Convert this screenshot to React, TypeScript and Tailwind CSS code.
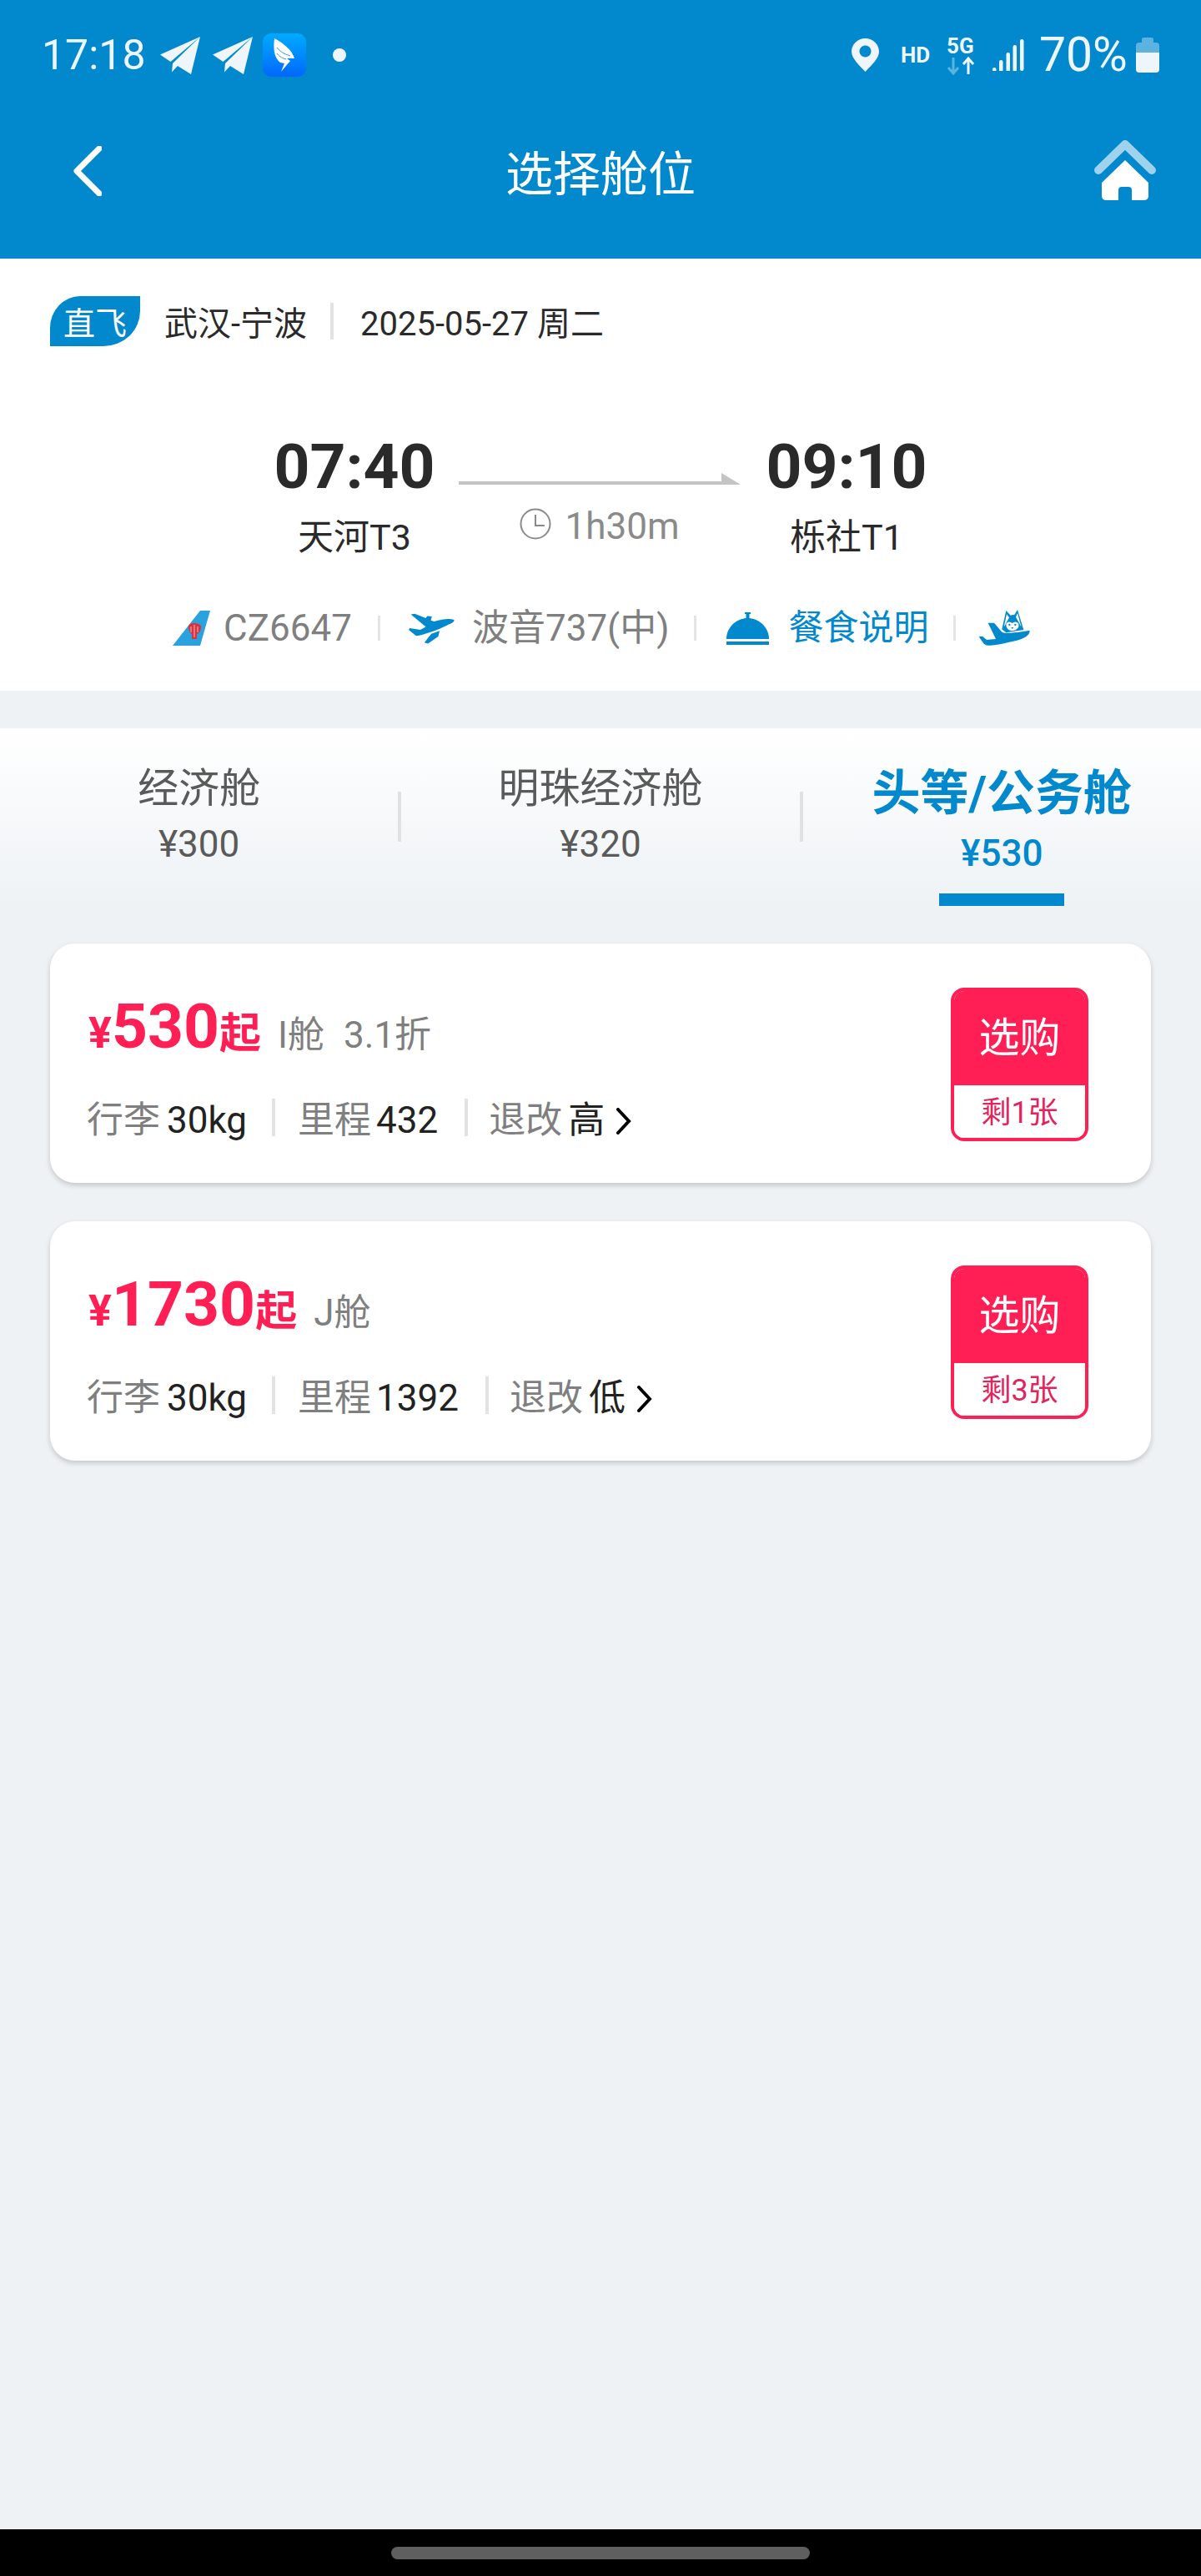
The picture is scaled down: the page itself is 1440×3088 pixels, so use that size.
import React from "react";

const BLUE = "#0288cc";

function Plane() {
  return (
    <svg width="48" height="45" viewBox="0 0 48 45" className="shrink-0">
      <path d="M48 0 L0 21.5 L12.5 30 Z" fill="#eef6fb" />
      <path d="M48 0 L37 45 L21 35 L14 42.5 L15 32 Z" fill="#eef6fb" />
    </svg>
  );
}

function AppIcon() {
  return (
    <div className="w-[52px] h-[52px] rounded-[10px] bg-gradient-to-b from-[#00aaff] to-[#0066ff] shrink-0 flex items-center justify-center">
      <svg width="52" height="52" viewBox="0 0 52 52">
        <path d="M14 6 C22 10 36 20 38 30 L29 30 L33 33 L22 46 L26 36 L21 35 C15 30 12 22 14 6 Z" fill="#ffffff" />
        <path d="M17 17 C21 22 26 25 33 27 M17 24 C20 28 24 30 28 31" stroke="#3a9bff" strokeWidth="1" fill="none" />
      </svg>
    </div>
  );
}

function Signal() {
  const bars = [
    [0, 34, 5],
    [8, 25, 14],
    [16.5, 16, 23],
    [24.5, 7, 32],
    [33, 0, 38],
  ];
  return (
    <svg width="38" height="38" viewBox="0 0 38 38" className="shrink-0">
      {bars.map(([x, y, h]) => (
        <rect key={x} x={x} y={y} width="4.5" height={h} rx="2.2" fill="#eef6fb" />
      ))}
    </svg>
  );
}

function StatusBar() {
  return (
    <div className="h-[132px] pl-[50px] pr-[50px] flex items-center justify-between text-[#eef6fb]">
      <div className="flex items-center">
        <span className="text-[50px] leading-[52px] font-normal w-[122px]">17:18</span>
        <div className="ml-[20px]"><Plane /></div>
        <div className="ml-[15px]"><Plane /></div>
        <div className="ml-[12px]"><AppIcon /></div>
        <div className="ml-[32px] w-[16px] h-[16px] rounded-full bg-[#eef6fb]" />
      </div>
      <div className="flex items-center">
        <svg width="33" height="40" viewBox="0 0 33 40" className="shrink-0">
          <path
            fillRule="evenodd"
            d="M16.5 0 C7.4 0 0 7 0 16 C0 24 10 33 16.5 40 C23 33 33 24 33 16 C33 7 25.6 0 16.5 0 Z M16.5 8.5 A7 7 0 1 1 16.49 8.5 Z"
            fill="#eef6fb"
          />
        </svg>
        <span className="ml-[26px] w-[36px] text-[26px] leading-[26px] font-bold">HD</span>
        <div className="ml-[19px] w-[35px] flex flex-col items-start">
          <span className="text-[26px] leading-[24px] font-bold">5G</span>
          <svg width="35" height="22" viewBox="0 0 35 22" className="mt-[1px]">
            <path d="M8 1 V19 M2 13 L8 20 L14 13" stroke="#5cb3e0" strokeWidth="3" fill="none" />
            <path d="M26 21 V3 M20 9 L26 2 L32 9" stroke="#eef6fb" strokeWidth="3" fill="none" />
          </svg>
        </div>
        <div className="ml-[20px]"><Signal /></div>
        <span className="ml-[18px] w-[108px] text-[57px] leading-[56px] font-normal">70%</span>
        <svg width="28" height="42" viewBox="0 0 28 42" className="ml-[8px] shrink-0">
          <path d="M7 6 V2 Q7 0 9 0 H19 Q21 0 21 2 V6 H24 Q28 6 28 10 V18 H0 V10 Q0 6 4 6 Z" fill="#5cb3e0" />
          <path d="M0 18 H28 V38 Q28 42 24 42 H4 Q0 42 0 38 Z" fill="#eef6fb" />
        </svg>
      </div>
    </div>
  );
}

function NavBar() {
  return (
    <div className="h-[150px] grid grid-cols-[1fr_auto_1fr] items-center">
      <div className="pl-[88px] -mt-[4px]">
        <svg width="34" height="60" viewBox="0 0 34 60">
          <path d="M31 3 L4 30 L31 57" stroke="#ffffff" strokeWidth="7" strokeLinecap="round" strokeLinejoin="round" fill="none" />
        </svg>
      </div>
      <div className="text-white text-[57px] leading-[70px] mt-[5px]">选择舱位</div>
      <div className="flex justify-end pr-[53px] -mt-[7px]">
        <svg width="76" height="74" viewBox="0 0 76 74">
          <path d="M6 37 L38 6 L70 37" stroke="#9fd2ec" strokeWidth="10" strokeLinecap="round" strokeLinejoin="round" fill="none" />
          <path
            fillRule="evenodd"
            d="M38 25 L66 52 V68 Q66 73 60 73 H46 V61 Q46 57 42 57 H34 Q30 57 30 61 V73 H16 Q10 73 10 68 V52 Z"
            fill="#ffffff"
          />
        </svg>
      </div>
    </div>
  );
}

function Tail() {
  return (
    <svg width="46" height="42" viewBox="0 0 46 42" className="shrink-0">
      <path d="M33 0 H45 L33 42 H0 Z" fill="#2aa2de" />
      <path d="M26 15 C22 15 18 17 19 20 C19 24 21 27 23 28 V34 H29 V28 C32 27 34 24 34 20 C35 17 30 15 26 15 Z" fill="#d8333f" />
      <path d="M26 17 V32 M22 19 V26 M30 19 V26" stroke="#f4b6ba" strokeWidth="1" fill="none" />
    </svg>
  );
}

function BluePlane() {
  return (
    <svg width="58" height="40" viewBox="55 60 175 120" className="shrink-0">
      <path
        d="M222 90 C205 84 180 88 150 96 L138 92 L142 78 L125 76 L120 84 L80 68 L66 70 L120 115 L100 126 L62 120 L58 126 L85 148 C110 145 170 125 200 108 C215 102 225 97 222 90 Z"
        fill={BLUE}
      />
      <path d="M170 130 L140 140 L115 172 L128 176 L165 150 Z" fill={BLUE} />
    </svg>
  );
}

function Bell() {
  return (
    <svg width="51" height="39" viewBox="0 0 51 39" className="shrink-0">
      <path d="M22 0 H29 V2 H27.5 V9 H23.5 V2 H22 Z" fill={BLUE} />
      <path d="M0 32 C0 18 12 7 25.5 7 C39 7 51 18 51 32 Z" fill={BLUE} />
      <rect x="0" y="35" width="51" height="4" fill={BLUE} />
    </svg>
  );
}

function Mascot() {
  return (
    <svg width="62" height="44" viewBox="65 50 186 132" className="shrink-0">
      <path
        d="M250 125 C235 125 170 140 150 130 L122 97 L100 97 L128 155 L95 158 L80 145 L67 147 L85 172 C100 185 140 175 170 168 C210 160 250 150 250 125 Z"
        fill={BLUE}
      />
      <path d="M150 120 L165 53 L181 70 Q190 67 194 69 L206 50 L228 122 L165 132 Z" fill={BLUE} />
      <path d="M157 112 L167 66 L176 78 Z M200 76 L206 62 L220 112 Z" fill="#ffffff" />
      <path d="M165 100 Q174 88 187 98 Q200 88 210 100 Q214 120 188 126 Q163 122 165 100 Z" fill="#ffffff" />
      <circle cx="177" cy="104" r="3.5" fill={BLUE} />
      <circle cx="198" cy="104" r="3.5" fill={BLUE} />
      <path d="M183 113 H192 L187.5 119 Z" fill={BLUE} />
    </svg>
  );
}

function Sep({ className }: { className: string }) {
  return <div className={"w-[3px] h-[30px] bg-[#e4e4e4] shrink-0 " + className} />;
}

function FlightInfo() {
  return (
    <div className="bg-white h-[518px]">
      <div className="pt-[45px] pl-[60px] flex items-center h-[105px]">
        <div className="w-[108px] h-[60px] bg-[#0288cc] rounded-tl-[36px_38px] rounded-br-[44px_42px] text-white text-[38px] leading-[66px] text-center shrink-0">
          直飞
        </div>
        <span className="ml-[29px] text-[40px] leading-[60px] text-[#2a2a2a] mt-[7px]">武汉-宁波</span>
        <div className="ml-[28px] w-[4px] h-[44px] bg-[#e2e2e2]" />
        <span className="ml-[32px] text-[40px] leading-[60px] text-[#2a2a2a] mt-[7px]">2025-05-27 周二</span>
      </div>

      <div className="mt-[106px] flex justify-center">
        <div className="w-[190px] flex flex-col items-center">
          <div className="text-[75px] leading-[76px] font-bold text-[#2a2a2a]">07:40</div>
          <div className="mt-[21px] text-[43px] leading-[52px] text-[#2a2a2a]">天河T3</div>
        </div>
        <div className="ml-[30px] w-[338px] flex flex-col items-center">
          <svg width="338" height="14" viewBox="0 0 338 14" className="mt-[46px]">
            <path d="M0 10 H315 V0 L338 14 H0 Z" fill="#c4c4c4" />
          </svg>
          <div className="mt-[28px] flex items-start text-[#8a8a8a]">
            <svg width="38" height="38" viewBox="0 0 38 38" className="shrink-0">
              <circle cx="19" cy="19" r="17.5" stroke="#8a8a8a" strokeWidth="2" fill="none" />
              <path d="M19 8 V21 H30" stroke="#8a8a8a" strokeWidth="2" fill="none" />
            </svg>
            <span className="ml-[16px] text-[44px] leading-[44px]">1h30m</span>
          </div>
        </div>
        <div className="ml-[32px] w-[190px] flex flex-col items-center">
          <div className="text-[75px] leading-[76px] font-bold text-[#2a2a2a]">09:10</div>
          <div className="mt-[21px] text-[43px] leading-[52px] text-[#2a2a2a]">栎社T1</div>
        </div>
      </div>

      <div className="mt-[59px] pl-[207px] flex items-center h-[48px]">
        <Tail />
        <span className="ml-[15px] text-[44px] leading-[48px] text-[#7f7f7f]">CZ6647</span>
        <Sep className="ml-[31px]" />
        <div className="ml-[33px]"><BluePlane /></div>
        <span className="ml-[19px] text-[44px] leading-[48px] text-[#7f7f7f]">波音737(中)</span>
        <Sep className="ml-[29px]" />
        <div className="ml-[36px]"><Bell /></div>
        <span className="ml-[24px] text-[42px] leading-[48px] text-[#0288cc]">餐食说明</span>
        <Sep className="ml-[29px]" />
        <div className="ml-[27px]"><Mascot /></div>
      </div>
    </div>
  );
}

function Tab({ name, price }: { name: string; price: string }) {
  return (
    <div className="flex-1 flex flex-col items-center pt-[43px] text-[#5a5a5a]">
      <div className="text-[49px] leading-[60px]">{name}</div>
      <div className="mt-[14px] text-[44px] leading-[44px]">{price}</div>
    </div>
  );
}

function Tabs() {
  return (
    <div className="mt-[45px] h-[213px] flex bg-gradient-to-b from-white to-[#eef2f5]">
      <Tab name="经济舱" price="¥300" />
      <div className="mt-[76px] w-[4px] h-[60px] bg-[#dfe1e3] shrink-0" />
      <Tab name="明珠经济舱" price="¥320" />
      <div className="mt-[76px] w-[4px] h-[60px] bg-[#dfe1e3] shrink-0" />
      <div className="flex-1 flex flex-col items-center pt-[48px] text-[#0288cc]">
        <div className="text-[58px] leading-[60px] font-bold">头等/公务舱</div>
        <div className="mt-[20px] text-[44px] leading-[44px] font-medium">¥530</div>
        <div className="mt-[26px] w-[150px] h-[15px] bg-[#0288cc]" />
      </div>
    </div>
  );
}

function Card({
  price,
  cls,
  extra,
  miles,
  level,
  left,
}: {
  price: string;
  cls: string;
  extra?: string;
  miles: string;
  level: string;
  left: number;
}) {
  return (
    <div className="bg-white h-[287px] rounded-[30px] shadow-[0_3px_6px_rgba(0,0,0,0.18)] flex items-start">
      <div className="flex-1 pl-[44px]">
        <div className="pt-[61px] flex items-baseline font-bold text-[#ff1f55] pl-[2px]">
          <span className="text-[52px] leading-[76px] w-[28px]">¥</span>
          <span className="text-[75px] leading-[76px]">{price}</span>
          <span className="text-[50px] leading-[76px]">起</span>
          <span className="ml-[20px] text-[44px] leading-[76px] font-normal text-[#7f7f7f]">{cls}</span>
          {extra ? (
            <span className="ml-[23px] text-[44px] leading-[76px] font-normal text-[#7f7f7f]">{extra}</span>
          ) : null}
        </div>
        <div className="mt-[42px] flex items-start text-[44px] leading-[44px]">
          <span className="text-[#7f7f7f]">行李</span>
          <span className="ml-[8px] text-[#222222]">30kg</span>
          <div className="ml-[30px] -mt-[4px] w-[4px] h-[45px] bg-[#e2e2e2]" />
          <span className="ml-[27px] text-[#7f7f7f]">里程</span>
          <span className="ml-[6px] text-[#222222]">{miles}</span>
          <div className="ml-[32px] -mt-[4px] w-[4px] h-[45px] bg-[#e2e2e2]" />
          <span className="ml-[25px] text-[#7f7f7f]">退改</span>
          <span className="ml-[7px] text-[#222222]">{level}</span>
          <svg width="20" height="32" viewBox="0 0 20 32" className="ml-[13px] mt-[7px]">
            <path d="M3 2 L16 16 L3 30" stroke="#000000" strokeWidth="4" fill="none" strokeLinecap="round" />
          </svg>
        </div>
      </div>
      <div className="mt-[53px] mr-[75px] w-[165px] h-[184px] rounded-[16px] border-[4px] border-[#ff1f55] overflow-hidden flex flex-col">
        <div className="h-[113px] bg-[#ff1f55] text-white text-[49px] leading-[113px] text-center">选购</div>
        <div className="flex-1 bg-white text-[#e0245e] text-[36px] leading-[66px] text-center">{"剩" + left + "张"}</div>
      </div>
    </div>
  );
}

export default function App() {
  return (
    <div className="w-[1440px] h-[3088px] bg-[#eef2f5] flex flex-col overflow-hidden font-['Roboto','Noto_Sans_CJK_SC',sans-serif]">
      <div className="h-[310px] bg-[#0288cc] shrink-0">
        <StatusBar />
        <NavBar />
      </div>
      <FlightInfo />
      <Tabs />
      <div className="px-[60px] pt-[45px] flex flex-col gap-[46px]">
        <Card price="530" cls="I舱" extra="3.1折" miles="432" level="高" left={1} />
        <Card price="1730" cls="J舱" miles="1392" level="低" left={3} />
      </div>
      <div className="flex-1" />
      <div className="h-[56px] bg-black shrink-0 flex justify-center pt-[21px]">
        <div className="w-[502px] h-[15px] rounded-[8px] bg-[#5f5f5f]" />
      </div>
    </div>
  );
}
